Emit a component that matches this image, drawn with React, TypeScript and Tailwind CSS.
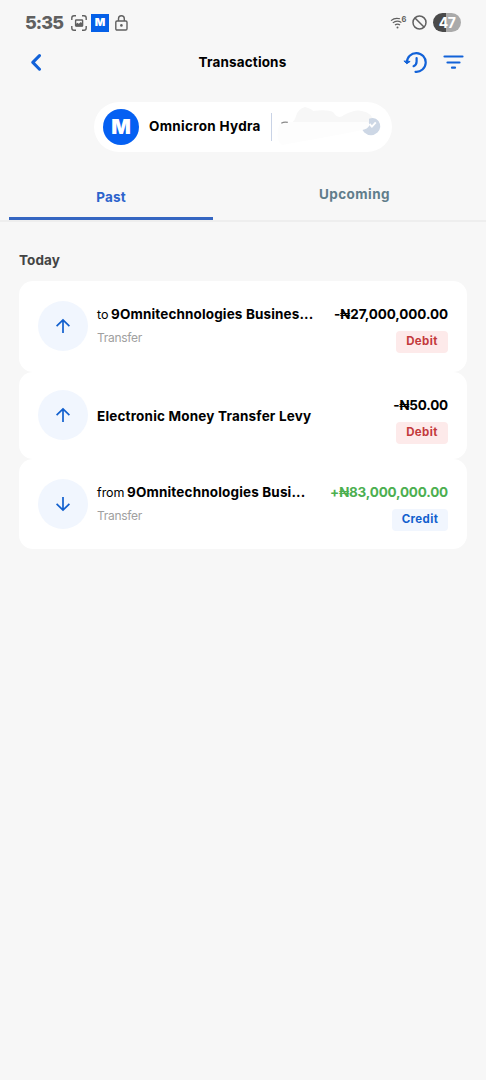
import clsx from "clsx"

type Entry = {
    id: number
    prefix?: string
    name: string
    type?: string
    amount: string
    kind: "Debit" | "Credit"
    cardClass: string
    nameClass: string
    prefixClass?: string
    amountClass: string
}

const entries: Entry[] = [
    {
        id: 1,
        prefix: "to",
        name: "9Omnitechnologies Busines...",
        type: "Transfer",
        amount: "-₦27,000,000.00",
        kind: "Debit",
        cardClass: "h-[91px] pt-5",
        prefixClass: "w-3.5",
        nameClass: "tracking-[0.14px]",
        amountClass: "tracking-[-0.1px]",
    },
    {
        id: 2,
        name: "Electronic Money Transfer Levy",
        amount: "-₦50.00",
        kind: "Debit",
        cardClass: "h-[87px] pt-[18px]",
        nameClass: "tracking-[0.19px]",
        amountClass: "tracking-[-0.2px]",
    },
    {
        id: 3,
        prefix: "from",
        name: "9Omnitechnologies Busi...",
        type: "Transfer",
        amount: "+₦83,000,000.00",
        kind: "Credit",
        cardClass: "h-[90px] pt-5",
        prefixClass: "w-[30px]",
        nameClass: "tracking-[0.16px]",
        amountClass: "tracking-[-0.2px]",
    },
]

const StatusBar = () => (
    <div className="flex h-11 items-center pt-[1px] pr-[25px] pl-[25px] text-[#606060]">
        <span className="w-[46px] text-[18px] leading-none font-extrabold tracking-[-0.9px]">5:35</span>

        <svg width="16" height="16" viewBox="0 0 16 16" fill="none" stroke="currentColor" strokeWidth="1.4">
            <path d="M.8 5V3Q.8.8 3 .8h2M11 .8h2q2.200 0 2.200 2.200v2M15.200 11v2q0 2.200-2.200 2.200h-2M5 15.200H3Q.8 15.200.8 13v-2" />
            <rect x="4.600" y="5" width="7" height="6" rx=".6" />
            <path d="M4.600 11.500V9.300l1.700-1.600 1.500 1 2-1.800 1.800 1.600v3z" fill="currentColor" stroke="none" />
        </svg>

        <span className="ml-[4px] flex h-[18px] w-[18px] items-center justify-center bg-[#0560e8]">
            <span className="text-[11px] leading-none font-black text-white">M</span>
        </span>

        <svg className="ml-[6px]" width="13" height="16" viewBox="0 0 13 16" fill="none" stroke="currentColor" strokeWidth="1.4">
            <rect x=".8" y="6" width="11.200" height="9" rx="1.200" />
            <path d="M3.500 6V3.700a2.900 2.900 0 0 1 5.800 0V6" />
            <circle cx="6.400" cy="10.400" r="1.300" fill="currentColor" stroke="none" />
        </svg>

        <div className="ml-auto flex items-center">
            <svg width="17" height="14" viewBox="0 0 17 14" fill="none" stroke="currentColor" strokeWidth="1.2">
                <path d="M1 4.600Q5 1.200 10 2.800M2.800 6.900q4-3.200 8.600-.3M5 9q2.500-1.900 5 0" />
                <circle cx="7.500" cy="11.600" r="1" fill="currentColor" stroke="none" />
                <text x="11.400" y="6.300" fontSize="7.500" fontWeight="700" fill="currentColor" stroke="none">
                    6
                </text>
            </svg>
            <svg className="ml-[5px]" width="15" height="15" viewBox="0 0 15 15" fill="none" stroke="currentColor" strokeWidth="1.500">
                <circle cx="7.500" cy="7.500" r="6.500" />
                <path d="m3 3 9 9" />
            </svg>
            <span className="ml-[6px] flex h-[19px] w-7 items-center justify-center rounded-full bg-[linear-gradient(90deg,#4a4a4a_47%,#aaaaaa_47%)] text-[14px] leading-none font-bold tracking-[-0.6px] text-white">
                47
            </span>
        </div>
    </div>
)

const Header = () => (
    <div className="flex h-9 items-center justify-between pr-[22px] pl-[29px]">
        <svg width="56" height="18" viewBox="0 0 56 18" fill="none" stroke="#1262d8" strokeWidth="3" strokeLinecap="round" strokeLinejoin="round">
            <path d="M10.500 2.600 3.800 9.400l6.700 6.800" />
        </svg>

        <h1 className="mr-[3px] text-[13.500px] font-bold tracking-[0.15px] text-black">Transactions</h1>

        <div className="flex items-center gap-4">
            <svg width="24" height="22" viewBox="0 0 24 22" fill="none" stroke="#1262d8" strokeWidth="2.200" strokeLinecap="round" strokeLinejoin="round">
                <path d="M3.900 11.500a9.400 9.400 0 1 1 8.600 9.300" />
                <path d="m1.200 10.300 2.600 2.400 3-2z" fill="#1262d8" strokeWidth="1" />
                <path d="M13.600 7v3.400q0 3.400-3 4.800" />
            </svg>
            <svg width="21" height="16" viewBox="0 0 21 16" fill="none" stroke="#1262d8" strokeWidth="2.200" strokeLinecap="round">
                <path d="M1.500 2.500h18M4.500 8.500h12M9 13.700h3" />
            </svg>
        </div>
    </div>
)

const AccountPill = () => (
    <div className="mx-auto mt-[22px] flex h-[50px] w-[298px] items-center rounded-full bg-white pl-[9px]">
        <span className="flex size-9 items-center justify-center rounded-full bg-[#0560f2]">
            <span className="text-[20.500px] leading-none font-black text-white">M</span>
        </span>
        <span className="ml-[10px] w-[122px] pb-0.5 text-[13.500px] leading-5 font-bold tracking-[0.3px] whitespace-nowrap text-black">
            Omnicron Hydra
        </span>
        <span className="h-7 w-px bg-[#c9d3e6]" />
        <svg className="ml-[5px]" width="106" height="44" viewBox="0 0 106 44">
            <path d="M14 18q4-2 5-7 2-7 9-9 7 2 8 4 14-2 20 1 5 8 11 3 11-6 18-4 11 2 12 12z" fill="#f7f7f7" />
            <path d="M2 20Q4 17 14 17h77q2 6-5 8-31 6-81 15-7-4-3-20z" fill="#fdfdfd" />
            <path d="M4.300 18.200q3-1.800 6.500-.8" fill="none" stroke="#888" strokeWidth="1.300" />
            <path d="M92 13.800q6-2.500 9.500 2.300 4 6-1 11.500-6.500 5.500-13.200-.2L85.500 25q5-1.200 6.500-4z" fill="#cdd7e5" />
            <path d="m92.500 19 2.400 2.600 3.900-4.300" fill="none" stroke="#fff" strokeWidth="1.900" />
        </svg>
    </div>
)

const Tabs = () => (
    <div className="mt-[22px] flex h-12 border-b-2 border-[#eeeeee] pl-[9px] text-[13.500px] font-bold">
        <div className="relative w-[204px] shrink-0 pt-[13px] text-center leading-5 tracking-[0.2px] text-[#2c63cc]">
            Past
            <span className="absolute bottom-0 left-0 h-[3px] w-full bg-[#3566c2]" />
        </div>
        <div className="w-[283px] shrink-0 pt-[10px] text-center leading-5 tracking-[0.45px] text-[#607d8b]">Upcoming</div>
    </div>
)

const DirectionIcon = ({ down }: { down: boolean }) => (
    <div className="flex size-[50px] shrink-0 items-center justify-center rounded-full bg-[#f1f6fe]">
        <svg
            className={clsx(down && "rotate-180")}
            width="16"
            height="16"
            viewBox="0 0 16 16"
            fill="none"
            stroke="#1260ce"
            strokeWidth="1.700"
        >
            <path d="M8 15V2M1.600 8.200 8 1.900l6.400 6.300" />
        </svg>
    </div>
)

const EntryCard = ({ entry }: { entry: Entry }) => {
    const isCredit = entry.kind === "Credit"

    return (
        <div className={clsx("flex rounded-[14px] bg-white pr-[19px] pl-[19px]", entry.cardClass)}>
            <DirectionIcon down={isCredit} />

            <div className={clsx("ml-[9px] flex flex-col whitespace-nowrap", entry.type ? "pt-[3px]" : "pt-4")}>
                <div className="flex h-5 items-baseline text-[13.500px] leading-5 text-black">
                    {entry.prefix && (
                        <span className={clsx("text-[12.500px]", entry.prefixClass)}>{entry.prefix}</span>
                    )}
                    <span className={clsx("font-bold", entry.nameClass)}>{entry.name}</span>
                </div>
                {entry.type && (
                    <span className="mt-[5px] text-[12px] leading-[18px] tracking-[-0.3px] text-[#a0a0a0]">{entry.type}</span>
                )}
            </div>

            <div className={clsx("ml-auto flex flex-col items-end whitespace-nowrap", entry.type ? "pt-[3px]" : "pt-[5px]")}>
                <span
                    className={clsx(
                        "text-[13.500px] leading-5 font-bold",
                        isCredit ? "text-[#4caf50]" : "text-black",
                        entry.amountClass,
                    )}
                >
                    {entry.amount}
                </span>
                <span
                    className={clsx(
                        "mt-[7px] flex h-[22px] items-center justify-center rounded text-[11.500px] font-bold tracking-[0.4px]",
                        isCredit ? "w-14 bg-[#f1f6fe] text-[#1260ce]" : "w-[52px] bg-[#fdeaea] text-[#c43a3c]",
                    )}
                >
                    {entry.kind}
                </span>
            </div>
        </div>
    )
}

export default function App() {
    return (
        <div className="min-h-[1080px] w-[486px] overflow-hidden bg-[#f7f7f7] font-['Inter',sans-serif]">
            <StatusBar />
            <Header />
            <AccountPill />
            <Tabs />

            <main className="px-[19px]">
                <h2 className="mt-7 mb-[11px] text-[13.500px] leading-5 font-bold tracking-[0.1px] text-[#444444]">Today</h2>
                {entries.map((entry) => (
                    <EntryCard key={entry.id} entry={entry} />
                ))}
            </main>
        </div>
    )
}
